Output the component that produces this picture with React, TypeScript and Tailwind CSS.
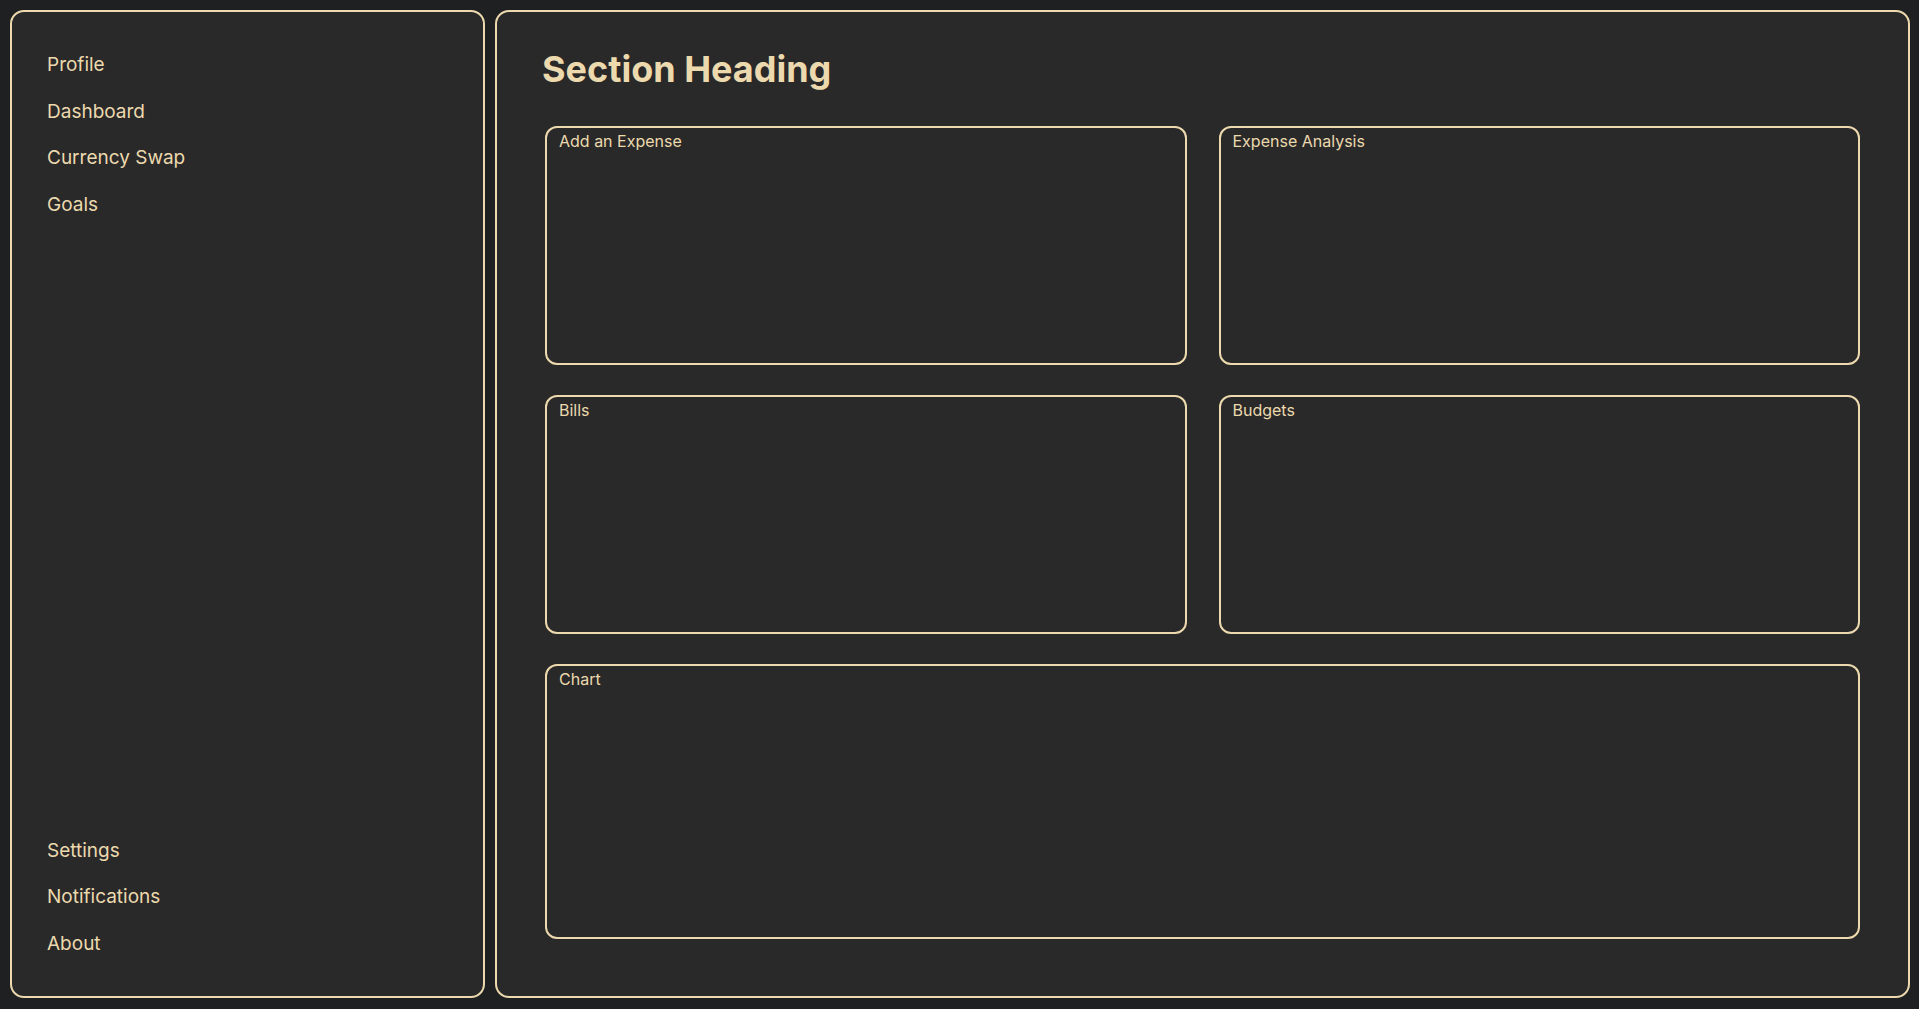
import { FC } from 'react';

const topLinks = ['Profile', 'Dashboard', 'Currency Swap', 'Goals'];
const bottomLinks = ['Settings', 'Notifications', 'About'];

const Card: FC<{ title: string; className?: string }> = ({ title, className }) => (
  <div className={`rounded-[12px] border-2 border-[#ecd9ae] bg-[#292929] px-3 pt-[1px] ${className ?? ''}`}>
    <span className="text-base leading-6 text-[#ecd9ae]">{title}</span>
  </div>
);

const App: FC = () => {
  return (
    <div
      className="flex h-screen gap-[10px] bg-[#1e2022] pb-[11px] pl-[10px] pr-[9px] pt-[10px]"
      style={{ fontFamily: 'Inter, "Open Sans", sans-serif' }}
    >
      <aside className="flex w-[475px] shrink-0 flex-col justify-between rounded-[14px] border-2 border-[#ecd9ae] bg-[#292929] px-[35px] pb-[29px] pt-[30px]">
        <nav className="flex flex-col">
          {topLinks.map((link) => (
            <a key={link} className="flex h-[46.5px] items-center text-[19px] text-[#ecd9ae]">
              {link}
            </a>
          ))}
        </nav>
        <nav className="flex flex-col">
          {bottomLinks.map((link) => (
            <a key={link} className="flex h-[46.5px] items-center text-[19px] text-[#ecd9ae]">
              {link}
            </a>
          ))}
        </nav>
      </aside>

      <main className="flex-1 rounded-[14px] border-2 border-[#ecd9ae] bg-[#292929] px-[45px] pt-[37px]">
        <h1 className="text-4xl font-bold text-[#ecd9ae]">Section Heading</h1>
        <div className="mt-[37px] grid grid-cols-2 gap-x-8 gap-y-[30px] pl-[3px] pr-[3px]">
          <Card title="Add an Expense" className="h-[239px]" />
          <Card title="Expense Analysis" className="h-[239px]" />
          <Card title="Bills" className="h-[239px]" />
          <Card title="Budgets" className="h-[239px]" />
          <Card title="Chart" className="col-span-2 h-[275px]" />
        </div>
      </main>
    </div>
  );
};

export default App;
